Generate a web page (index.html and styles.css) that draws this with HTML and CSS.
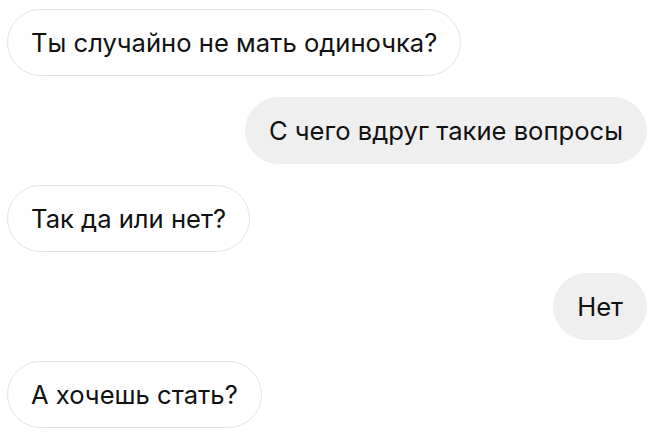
FILE: index.html
```html
<!DOCTYPE html>
<html lang="ru">
<head>
    <meta charset="UTF-8">
    <meta name="viewport" content="width=device-width, initial-scale=1.0">
    <title>Чат</title>
    <link rel="stylesheet" href="styles.css">
</head>
<body>
    <div class="chat">
        <div class="msg incoming">Ты случайно не мать одиночка?</div>
        <div class="msg outgoing">С чего вдруг такие вопросы</div>
        <div class="msg incoming">Так да или нет?</div>
        <div class="msg outgoing">Нет</div>
        <div class="msg incoming">А хочешь стать?</div>
    </div>
</body>
</html>
```

FILE: styles.css
```css
body {
    font-family: Inter, "Liberation Sans", Arial, sans-serif;
    margin: 0;
    padding: 0;
    background-color: #fff;
    color: #111;
}

.chat {
    display: flex;
    flex-direction: column;
    gap: 21px;
    padding: 9px 13px 0 7px;
}

.msg {
    box-sizing: border-box;
    height: 67px;
    line-height: 65px;
    padding: 0 23px;
    font-size: 25.6px;
    border-radius: 34px;
    border: 1px solid #e4e4e4;
    white-space: nowrap;
}

.incoming {
    align-self: flex-start;
    background-color: #fff;
}

.outgoing {
    align-self: flex-end;
    background-color: #efefef;
    border-color: #efefef;
}
```
